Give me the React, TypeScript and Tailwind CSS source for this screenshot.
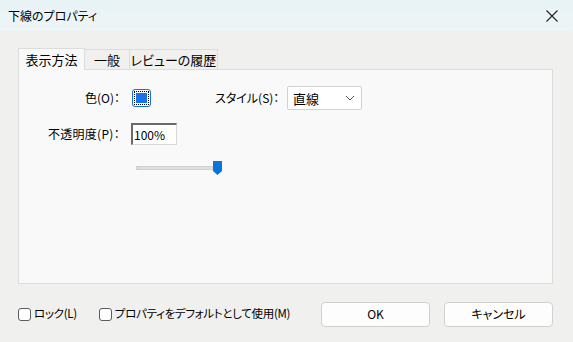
const jp = {
  fontFamily: '"Noto Sans CJK JP", "Noto Sans", sans-serif',
  fontFeatureSettings: '"palt"',
};

function Checkbox({ label }: { label: string }) {
  return (
    <label className="flex items-center gap-[3px] whitespace-nowrap">
      <span className="w-[13px] h-[13px] rounded-[3px] border border-[#5c5c5c] bg-white shrink-0" />
      <span className="text-[11.5px] tracking-[-0.3px]">{label}</span>
    </label>
  );
}

export default function App() {
  return (
    <div
      className="w-[573px] h-[342px] flex flex-col bg-[#f0f0ee] text-[12px] text-black leading-none overflow-hidden whitespace-nowrap"
      style={jp}
    >
      {/* title bar */}
      <div className="h-[31px] flex items-center justify-between bg-gradient-to-b from-[#e8f3f6] to-[#eef5f7] pl-[8px] pr-[6px]">
        <span className="text-[12px]">下線のプロパティ</span>
        <svg width="30" height="20" viewBox="0 0 30 20" className="mt-[1px]">
          <path d="M9.5 4.5 L20.5 15.5 M20.5 4.5 L9.5 15.5" stroke="#222" strokeWidth="1.1" />
        </svg>
      </div>

      {/* tabs */}
      <div className="flex items-end ml-[18px] mt-[16px] h-[22px]">
        <div className="h-[22px] w-[67px] flex items-center justify-center bg-[#f8f9f8] border border-b-0 border-[#dcdcdc] text-[13px] -mb-px relative z-10">
          表示方法
        </div>
        <div className="h-[20px] w-[45px] flex items-center justify-center border border-l-0 border-b-0 border-[#dcdcdc] text-[13px] bg-[#f0f0ee]">
          一般
        </div>
        <div className="h-[20px] w-[88px] flex items-center justify-center border border-l-0 border-b-0 border-[#dcdcdc] text-[13px] bg-[#f0f0ee]">
          レビューの履歴
        </div>
      </div>

      {/* panel */}
      <div className="ml-[18px] w-[535px] h-[215px] bg-[#f8f9f8] border border-[#dcdcdc] flex flex-col pt-[16px]">
        <div className="flex items-center h-[24px]">
          <span className="w-[102px] text-right pr-[1px]">色(O)：</span>
          <div className="ml-[11px] w-[19px] h-[18px] rounded-[3px] border border-[#1a6fd8] p-[1px]">
            <div className="w-full h-full border border-dotted border-black p-[1px]">
              <div className="w-full h-full bg-[#1a73e8]" />
            </div>
          </div>
          <span className="ml-[64px] w-[72px]">スタイル(S)：</span>
          <div className="w-[75px] h-[24px] bg-white border border-[#d2d2d2] rounded-[2px] flex items-center justify-between pl-[5px] pr-[6px] text-[13px]">
            <span>直線</span>
            <svg width="10" height="6" viewBox="0 0 10 6">
              <path d="M1 1 L5 5 L9 1" fill="none" stroke="#555" strokeWidth="1" />
            </svg>
          </div>
        </div>

        <div className="flex items-center h-[22px] mt-[13px]">
          <span className="w-[102px] text-right pr-[1px] tracking-[0.3px]">不透明度(P)：</span>
          <div className="ml-[10px] w-[46px] h-[22px] bg-white border border-[#d8d8d8] border-l-[#6a6a6a] border-t-[#6a6a6a] border-l-2 border-t-2 flex items-center pl-[1px] text-[12px]">
            100%
          </div>
        </div>

        <div className="ml-[117px] mt-[16px] flex items-center h-[14px]">
          <div className="w-[80px] h-[4px] bg-[#dedede] border border-[#d0d0d0]" />
          <svg width="9" height="14" viewBox="0 0 9 14" className="-ml-[3px]">
            <path d="M0 0 H9 V10 L4.5 14 L0 10 Z" fill="#0a74d8" />
          </svg>
        </div>
      </div>

      {/* bottom row */}
      <div className="flex items-center mt-[18px] h-[24px]">
        <div className="ml-[18px]">
          <Checkbox label="ロック(L)" />
        </div>
        <div className="ml-[22px]">
          <Checkbox label="プロパティをデフォルトとして使用(M)" />
        </div>
        <button className="ml-auto w-[109px] h-[25px] bg-[#fdfdfd] border border-[#d0d0d0] rounded-[4px] shrink-0">
          OK
        </button>
        <button className="ml-[14px] mr-[20px] w-[109px] h-[25px] bg-[#fdfdfd] border border-[#d0d0d0] rounded-[4px] shrink-0">
          キャンセル
        </button>
      </div>
    </div>
  );
}
